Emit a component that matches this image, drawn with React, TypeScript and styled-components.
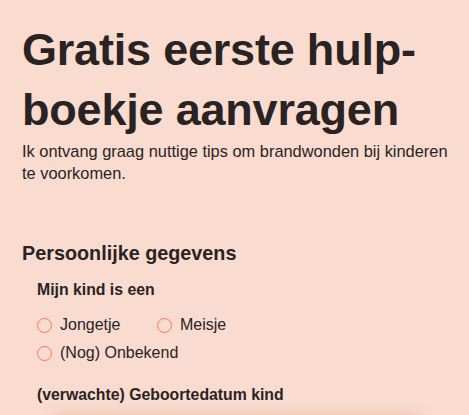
import styled, { createGlobalStyle } from 'styled-components'

const GlobalStyle = createGlobalStyle`
  html, body {
    margin: 0;
    padding: 0;
    background: #f9dccf;
  }
  body {
    font-family: 'Liberation Sans', Arial, Helvetica, sans-serif;
    color: #2a2323;
  }
`

const Card = styled.div`
  background-color: #f9dccf;
  width: 469px;
  height: 415px;
  overflow: hidden;
  box-sizing: border-box;
  padding: 20px 10px 0 22px;
`

const Title = styled.h1`
  margin: 0;
  font-size: 45px;
  font-weight: 700;
  line-height: 60px;
  letter-spacing: -0.2px;
`

const Intro = styled.p`
  margin: 0;
  max-width: 436px;
  font-size: 16.4px;
  line-height: 22px;
`

const SectionTitle = styled.h2`
  margin: 57px 0 0 0;
  font-size: 19.8px;
  font-weight: 700;
  line-height: 24px;
`

const Field = styled.div<{ $top: number }>`
  padding-left: 15px;
  margin-top: ${p => p.$top}px;
`

const Label = styled.div`
  font-size: 15.8px;
  font-weight: 700;
  line-height: 20px;
`

const RadioGrid = styled.div`
  display: grid;
  grid-template-columns: 120px auto;
  row-gap: 8px;
  margin-top: 15px;
  white-space: nowrap;
`

const RadioItem = styled.label`
  display: flex;
  align-items: center;
  gap: 8px;
  font-size: 16px;
  line-height: 20px;
`

const Circle = styled.span`
  width: 13px;
  height: 13px;
  border: 1.3px solid #f4774f;
  border-radius: 50%;
  flex-shrink: 0;
`

const Input = styled.div`
  margin: 14px 0 0 16px;
  width: 367px;
  height: 40px;
  background: #fff;
  border-radius: 3px;
  box-shadow: 0 -4px 14px rgba(200, 140, 120, 0.35);
`

const Radio = ({ label }: { label: string }) => (
  <RadioItem>
    <Circle />
    {label}
  </RadioItem>
)

const App = () => {
  return (
    <Card>
      <GlobalStyle />
      <Title>Gratis eerste hulp-boekje aanvragen</Title>
      <Intro>Ik ontvang graag nuttige tips om brandwonden bij kinderen te voorkomen.</Intro>
      <SectionTitle>Persoonlijke gegevens</SectionTitle>
      <Field $top={15}>
        <Label>Mijn kind is een</Label>
        <RadioGrid>
          <Radio label="Jongetje" />
          <Radio label="Meisje" />
          <Radio label="(Nog) Onbekend" />
        </RadioGrid>
      </Field>
      <Field $top={22}>
        <Label>(verwachte) Geboortedatum kind</Label>
        <Input />
      </Field>
    </Card>
  )
}

export default App
